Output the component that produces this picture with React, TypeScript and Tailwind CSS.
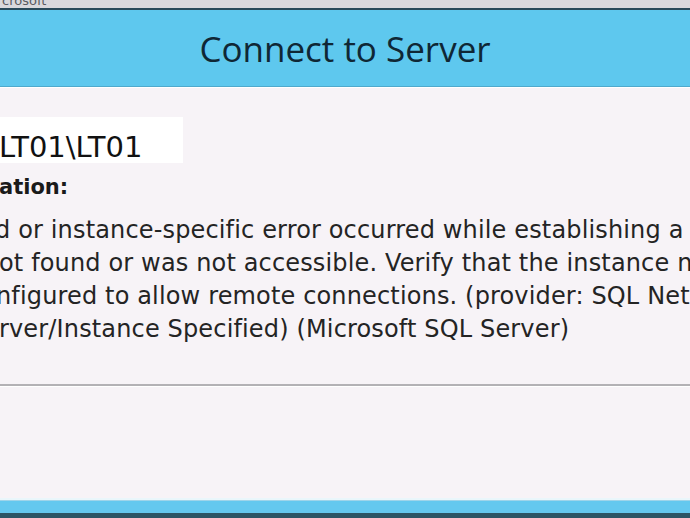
import React from "react";

/* ── Error text lines (the dialog is cropped on the left) ─────────── */
const LINES = [
  { text: "d or instance-specific error occurred while establishing a connection", offset: "-ml-[5px]" },
  { text: "ot found or was not accessible. Verify that the instance name", offset: "-ml-[1px]" },
  { text: "nfigured to allow remote connections. (provider: SQL Network", offset: "-ml-[4px]" },
  { text: "rver/Instance Specified) (Microsoft SQL Server)", offset: "-ml-[1px]" },
];

const App = () => {
  return (
    <div className="flex h-[518px] w-[690px] flex-col overflow-hidden bg-[#f7f3f7] font-['DejaVu_Sans',sans-serif]">
      {/* ── Window caption strip ── */}
      <div className="relative h-[8px] overflow-hidden bg-[#d9d8dd]">
        <span className="absolute -top-[9px] left-[2px] text-[13px] text-[#5a5a60]">crosoft</span>
      </div>
      <div className="h-[2px] bg-[#28495a]" />

      {/* ── Blue header ── */}
      <div className="flex h-[76px] items-center justify-center bg-[#5ec8ee] pt-[1px]">
        <h1 className="font-['Open_Sans',sans-serif] text-[35px] leading-none text-[#0f2735]">
          Connect to Server
        </h1>
      </div>
      <div className="h-[1px] bg-[#4fa9cc]" />
      <div className="h-[1px] bg-white" />

      {/* ── Body ── */}
      <div className="flex flex-1 flex-col">
        <div className="mt-[29px] flex h-[46px] w-[183px] items-end bg-white pb-[1px]">
          <span className="-ml-[1px] whitespace-nowrap text-[29px] leading-none text-[#111]">LT01\LT01</span>
        </div>

        <p className="mt-[14px] -ml-[1px] whitespace-nowrap text-[21px] font-bold leading-[20px] text-[#1a1a1a]">
          ation:
        </p>

        <div className="mt-[21px] flex flex-col gap-[9px]">
          {LINES.map((line) => (
            <p
              key={line.text}
              className={`${line.offset} whitespace-nowrap text-[24px] leading-[24px] tracking-[0.15px] text-[#242424]`}
            >
              {line.text}
            </p>
          ))}
        </div>

        {/* separator */}
        <div className="mt-[43px] h-[2px] bg-[#b3b1b5]" />
        <div className="h-[1px] bg-white" />

        <div className="flex-1" />
      </div>

      {/* ── Bottom blue bar ── */}
      <div className="h-[2px] bg-[#eaf6fb]" />
      <div className="h-[1px] bg-[#9fd4ea]" />
      <div className="h-[12px] bg-[#64c8ef]" />
      <div className="h-[5px] bg-[#2c5565]" />
    </div>
  );
};

export default App;
